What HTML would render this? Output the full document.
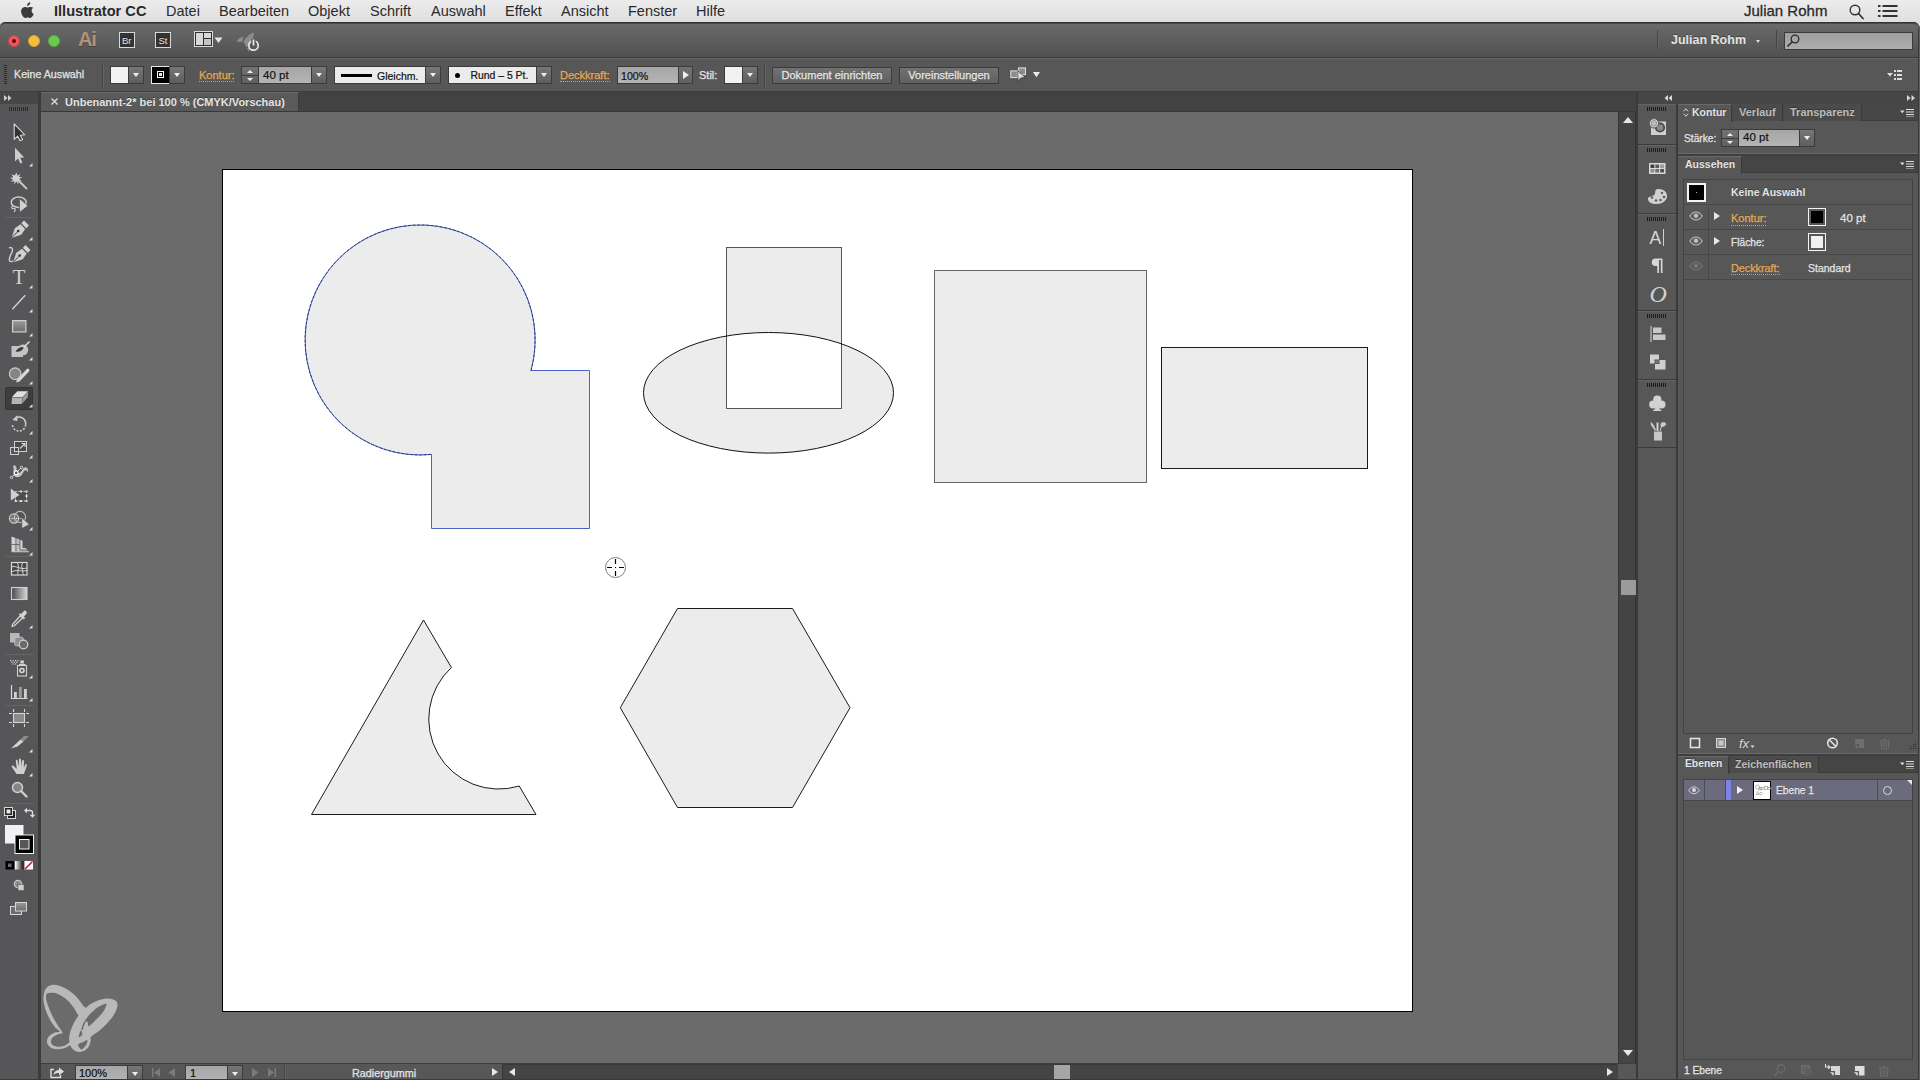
<!DOCTYPE html>
<html lang="de">
<head>
<meta charset="utf-8">
<title>Illustrator CC</title>
<style>
*{box-sizing:border-box;margin:0;padding:0}
html,body{width:1920px;height:1080px;overflow:hidden;background:#575757}
body{position:relative;font-family:"DejaVu Sans Condensed","DejaVu Sans","Liberation Sans",sans-serif;font-size:11px;color:#e6e6e6}
.abs{position:absolute}
.t{position:absolute;white-space:nowrap;line-height:1}
#menubar{left:0;top:0;width:1920px;height:30px;background:linear-gradient(#ececec 0,#dfdfdf 22px);color:#2a2a2a;font-family:"Liberation Sans",sans-serif;font-size:14.5px}
#menubar .t{top:0;line-height:22px}
#appbar{left:0;top:22px;width:1919px;height:36px;background:linear-gradient(#6b6b6b,#515151);border-top:1px solid #333;box-shadow:inset 0 1px 0 #4a4a4a;border-bottom:1px solid #3a3a3a;border-radius:5px 5px 0 0}
#ctrlbar{left:0;top:58px;width:1920px;height:34px;background:#575757;border-top:1px solid #666;border-bottom:1px solid #3c3c3c}
#tabstrip{left:41px;top:92px;width:1595px;height:20px;background:#424242;border-bottom:1px solid #383838}
#canvas{left:41px;top:112px;width:1577px;height:951px;background:#6b6b6b}
#artboard{left:222px;top:169px;width:1191px;height:843px;background:#fff;border:1px solid #000}
#tools{left:0;top:92px;width:41px;height:988px;background:#565658;border-right:3px solid #3b3b3b}
#vscroll{left:1618px;top:112px;width:18px;height:951px;background:#444;border-left:1px solid #363636;border-right:1px solid #363636}
#statusbar{left:41px;top:1063px;width:1595px;height:17px;background:#575757;border-top:1px solid #3e3e3e}
#panels{left:1678px;top:92px;width:242px;height:988px;background:#575757}
.b{font-weight:bold;-webkit-text-stroke:0}
.dim{color:#bdbdbd}
.ptab{background:#4b4b4b;border-right:1px solid #3a3a3a}
.ptab.on{background:#575757;border-top:1px solid #6a6a6a}

.ui{font-family:"Liberation Sans",sans-serif;font-size:11px;color:#e4e4e4;-webkit-text-stroke:0.3px currentColor;text-shadow:0 -1px 0 rgba(0,0,0,.35)}
.or{color:#e2aa5a}
.dk{color:#111;text-shadow:none;-webkit-text-stroke:0.2px #111}
.dd{position:absolute;width:16px;background:linear-gradient(#767676,#5e5e5e);border:1px solid #3b3b3b}
.dd:after{content:"";position:absolute;left:50%;top:50%;margin:-2px 0 0 -3.5px;border:3.5px solid transparent;border-top:4.5px solid #efefef;border-bottom:0}
.inp{position:absolute;background:linear-gradient(#a6a6a6,#b4b4b4);border:1px solid #3b3b3b}
.lt{position:absolute;background:#ebebeb;border:1px solid #3b3b3b}
.btn{position:absolute;background:linear-gradient(#727272,#5f5f5f);border:1px solid #3b3b3b;text-align:center}
.sep{position:absolute;width:2px;border-left:1px solid #474747;border-right:1px solid #646464}
.dot{border-bottom:1px dotted #d6a050}
#ctrlbar .t,#tabstrip .t{margin-top:1px}
#panels .t{margin-top:.5px}
#panels .t.b{margin-top:.2px}
</style>
</head>
<body>
<!-- mac menu bar -->
<div id="menubar" class="abs">
<svg class="abs" style="left:20px;top:2px" width="15" height="17" viewBox="0 0 15 17"><path fill="#3a3a3a" d="M10.3 0.2c.1 1-.3 1.9-.9 2.6-.6.7-1.500 1.200-2.400 1.100-.1-.9.400-1.900.900-2.500C8.500.7 9.500.2 10.300.200zM13.300 5.800c-.1.100-1.700 1-1.700 3 0 2.300 2 3.100 2.100 3.100 0 .1-.3 1.100-1.100 2.200-.6.900-1.300 1.900-2.400 1.900-1 0-1.300-.6-2.500-.6s-1.600.6-2.500.6c-1.100 0-1.800-1-2.500-1.900C1.400 12.200.500 9.400 1.500 7.300c.600-1.500 2-2.400 3.400-2.400 1.100 0 2 .700 2.600.700.600 0 1.700-.800 3-.700.500 0 2 .200 2.800.900z"/></svg>
<span class="t" style="left:54px;font-weight:bold;font-size:14.6px">Illustrator CC</span>
<span class="t" style="left:166px">Datei</span>
<span class="t" style="left:219px">Bearbeiten</span>
<span class="t" style="left:308px">Objekt</span>
<span class="t" style="left:370px">Schrift</span>
<span class="t" style="left:431px">Auswahl</span>
<span class="t" style="left:505px">Effekt</span>
<span class="t" style="left:561px">Ansicht</span>
<span class="t" style="left:628px">Fenster</span>
<span class="t" style="left:696px">Hilfe</span>
<span class="t" style="left:1744px;font-size:15px;-webkit-text-stroke:0.3px #2a2a2a">Julian Rohm</span>
<svg class="abs" style="left:1848px;top:3px" width="18" height="18" viewBox="0 0 18 18"><circle cx="7" cy="7" r="4.800" fill="none" stroke="#333" stroke-width="1.400"/><path d="M10.500 10.500L15 15.500" stroke="#333" stroke-width="1.800" stroke-linecap="round"/></svg>
<svg class="abs" style="left:1878px;top:5px" width="20" height="12" viewBox="0 0 20 12"><g fill="#333"><rect x="0" y="0" width="2.500" height="2"/><rect x="4.500" y="0" width="15" height="2"/><rect x="0" y="5" width="2.500" height="2"/><rect x="4.500" y="5" width="15" height="2"/><rect x="0" y="10" width="2.500" height="2"/><rect x="4.500" y="10" width="15" height="2"/></g></svg>
</div>
<!-- application bar -->
<div id="appbar" class="abs ui">
<div class="abs" style="left:8px;top:12px;width:12px;height:12px;border-radius:6px;background:#e8585c;border:1px solid #c9484c"></div><div class="abs" style="left:12px;top:16px;width:4px;height:4px;border-radius:2px;background:#5a0a0c"></div>
<div class="abs" style="left:28px;top:12px;width:12px;height:12px;border-radius:6px;background:#f3be3b;border:1px solid #d8a22a"></div>
<div class="abs" style="left:48px;top:12px;width:12px;height:12px;border-radius:6px;background:#6bcb4c;border:1px solid #55b03a"></div>
<span class="t" style="left:78px;top:6px;font-size:20px;font-weight:bold;color:#b39179;-webkit-text-stroke:0;text-shadow:0 1px 0 rgba(0,0,0,.3);letter-spacing:-1.2px">Ai</span>
<div class="abs" style="left:119px;top:9px;width:16px;height:16px;border:1px solid #d9d9d9;background:#333"></div><span class="t" style="left:122px;top:12.500px;font-size:9.500px;color:#e6e6e6;-webkit-text-stroke:0">Br</span>
<div class="abs" style="left:155px;top:9px;width:16px;height:16px;border:1px solid #d9d9d9;background:#333"></div><span class="t" style="left:158.500px;top:12.500px;font-size:9.500px;color:#e6e6e6;-webkit-text-stroke:0">St</span>
<svg class="abs" style="left:194px;top:8px" width="30" height="16" viewBox="0 0 30 16"><rect x="0.500" y="0.500" width="18" height="15" fill="#2f2f2f" stroke="#dcdcdc"/><rect x="2" y="2" width="7" height="12" fill="#d8d8d8"/><rect x="10" y="2" width="7" height="5" fill="#d8d8d8"/><rect x="10" y="8" width="7" height="6" fill="#c4c4c4"/><path d="M20.500 6.500h8l-4 5.500z" fill="#e4e4e4"/></svg>
<svg class="abs" style="left:235px;top:8px" width="26" height="22" viewBox="0 0 26 22"><path d="M19 1.500c-4 1-8 4.500-10.500 9l3 6c4-3 7-8 7.500-15z" fill="#8d8d8d"/><path d="M8.500 5.500c-3 .5-5.500 2.500-7 5l5.500.500z" fill="#8d8d8d"/><path d="M12 17l1.500 3.500 2-3z" fill="#8d8d8d"/><circle cx="18.500" cy="14.500" r="4.700" fill="none" stroke="#e8e8e8" stroke-width="1.700"/><path d="M18.500 8v6" stroke="#585858" stroke-width="4.500"/><path d="M18.500 8.500v6" stroke="#e8e8e8" stroke-width="1.800"/></svg>
<div class="sep" style="left:1657px;top:7px;height:20px"></div>
<span class="t" style="left:1671px;top:11px;font-size:12.500px;font-weight:bold;-webkit-text-stroke:0">Julian Rohm</span>
<div class="abs" style="left:1755.500px;top:16.500px;border:2.500px solid transparent;border-top:3px solid #ddd;border-bottom:0"></div>
<div class="sep" style="left:1776px;top:7px;height:20px"></div>
<div class="inp" style="left:1784px;top:9px;width:129px;height:18px;background:linear-gradient(#9f9f9f,#adadad)"></div>
<svg class="abs" style="left:1786px;top:10px" width="16" height="16" viewBox="0 0 16 16"><circle cx="9" cy="6" r="3.800" fill="none" stroke="#2a2a2a" stroke-width="1.300"/><path d="M6.300 8.700L1.500 13.500" stroke="#2a2a2a" stroke-width="1.600"/></svg>
</div>
<!-- control bar -->
<div id="ctrlbar" class="abs ui">
<div class="abs" style="left:4px;top:6px;width:3px;height:20px;background:repeating-linear-gradient(#2c2c2c 0 1px,transparent 1px 2px)"></div>
<span class="t" style="left:14px;top:9px;font-size:10.700px">Keine Auswahl</span>
<div class="sep" style="left:102px;top:4px;height:25px"></div>
<div class="lt" style="left:110px;top:7px;width:19px;height:18px;background:#f2f2f2"></div><div class="dd" style="left:128px;top:7px;height:18px"></div>
<div class="abs" style="left:151px;top:7px;width:19px;height:18px;background:#000;border:1px solid #e8e8e8"></div><div class="abs" style="left:157px;top:12px;width:7px;height:7px;border:1px solid #fff;background:#000"></div><div class="abs" style="left:159px;top:14px;width:3px;height:3px;background:#e8e8e8"></div><div class="dd" style="left:169px;top:7px;height:18px"></div>
<span class="t or dot" style="left:199px;top:10px;padding-bottom:0">Kontur:</span>
<div class="btn" style="left:241px;top:7px;width:18px;height:18px"><div class="abs" style="left:0;top:8px;width:16px;height:1px;background:#3b3b3b"></div><div class="abs" style="left:5px;top:2.500px;border:3px solid transparent;border-bottom:3.500px solid #efefef;border-top:0"></div><div class="abs" style="left:5px;top:11px;border:3px solid transparent;border-top:3.500px solid #efefef;border-bottom:0"></div></div>
<div class="inp" style="left:258px;top:7px;width:54px;height:18px"></div><span class="t dk" style="left:263px;top:10px;font-size:11.500px">40 pt</span>
<div class="dd" style="left:311px;top:7px;height:18px"></div>
<div class="lt" style="left:334px;top:7px;width:92px;height:18px"></div><div class="abs" style="left:341px;top:15px;width:31px;height:3px;background:#000"></div><span class="t dk" style="left:377px;top:10.500px;font-size:10.500px">Gleichm.</span><div class="dd" style="left:425px;top:7px;height:18px"></div>
<div class="lt" style="left:448px;top:7px;width:89px;height:18px"></div><div class="abs" style="left:455px;top:14px;width:5px;height:5px;border-radius:3px;background:#000"></div><span class="t dk" style="left:470.500px;top:10.500px;font-size:10.400px">Rund – 5 Pt.</span><div class="dd" style="left:536px;top:7px;height:18px"></div>
<span class="t or dot" style="left:560px;top:10px;padding-bottom:0">Deckkraft:</span>
<div class="inp" style="left:617px;top:7px;width:62px;height:18px"></div><span class="t dk" style="left:621px;top:10.500px;font-size:10.600px">100%</span>
<div class="btn" style="left:678px;top:7px;width:15px;height:18px"><div class="abs" style="left:4px;top:4px;border:4.500px solid transparent;border-left:6px solid #efefef;border-right:0"></div></div>
<span class="t" style="left:699px;top:10px">Stil:</span>
<div class="lt" style="left:724px;top:7px;width:19px;height:18px;background:#f2f2f2"></div><div class="dd" style="left:742px;top:7px;height:18px"></div>
<div class="sep" style="left:764px;top:4px;height:25px"></div>
<div class="btn" style="left:772px;top:8px;width:120px;height:17px;line-height:15px">Dokument einrichten</div>
<div class="btn" style="left:899px;top:8px;width:100px;height:17px;line-height:15px">Voreinstellungen</div>
<svg class="abs" style="left:1009px;top:8px" width="34" height="16" viewBox="0 0 34 16"><rect x="1.800" y="3.900" width="6.600" height="6.700" fill="#8c8c8c" stroke="#e2e2e2" stroke-width="1"/><rect x="9.700" y=".9" width="6.800" height="6.700" fill="#8c8c8c" stroke="#e2e2e2" stroke-width="1"/><path d="M8.800 3.800L9 14 11.600 11.100 16.200 10.300Z" fill="#dedede" stroke="#333" stroke-width=".7"/><path d="M23.900 5h7.100l-3.550 5.200z" fill="#eaeaea"/></svg>
<svg class="abs" style="left:1887px;top:11px" width="16" height="10" viewBox="0 0 16 10"><path d="M0 3h6l-3 3.500z" fill="#ddd"/><g fill="#ddd"><rect x="7" y="0" width="2" height="2"/><rect x="10" y="0" width="5" height="2"/><rect x="7" y="4" width="2" height="2"/><rect x="10" y="4" width="5" height="2"/><rect x="7" y="8" width="2" height="2"/><rect x="10" y="8" width="5" height="2"/></g></svg>
</div>
<!-- document tab strip -->
<div id="tabstrip" class="abs ui">
<div class="abs" style="left:0;top:0;width:258px;height:19px;background:#5a5a5a;border-right:1px solid #3a3a3a;border-top:1px solid #6a6a6a"></div>
<svg class="abs" style="left:9px;top:5px" width="9" height="9" viewBox="0 0 9 9"><path d="M1.500 1.500l6 6M7.500 1.500l-6 6" stroke="#e0e0e0" stroke-width="1.300"/></svg>
<span class="t" style="left:24px;top:4px;font-weight:bold;font-size:11px;-webkit-text-stroke:0">Unbenannt-2* bei 100 % (CMYK/Vorschau)</span>
</div>
<!-- canvas -->
<div id="canvas" class="abs"></div>
<div id="artboard" class="abs"></div>
<svg class="abs" id="art" style="left:0;top:0" width="1920" height="1080" viewBox="0 0 1920 1080">
<g fill="#ececec" stroke="#1a1a1a" stroke-width="1">
<path d="M531.0 370.5 A115 115 0 1 0 431.5 454.4 L431.5 528.5 L589.5 528.5 L589.5 370.5 Z" stroke="#4a63c8"/>
<path d="M531 370.500A115 115 0 1 0 431.500 454.400" fill="none" stroke="#1c2660" stroke-dasharray="3 1.500" stroke-opacity=".8"/>
<path fill-rule="evenodd" stroke="none" d="M726.500 247.500H841.500V408.500H726.500Z M643.500 392.800a125 60.300 0 1 0 250 0a125 60.300 0 1 0 -250 0Z"/>
<rect x="726.500" y="247.500" width="115" height="161" fill="none" stroke="#555"/>
<ellipse cx="768.500" cy="392.800" rx="125" ry="60.300" fill="none" stroke="#111"/>
<rect x="934.5" y="270.5" width="212" height="212" stroke="#666"/>
<rect x="1161.5" y="347.5" width="206" height="121"/>
<path d="M423.5 620 L451.4 667.5 A70 70 0 0 0 519.2 786 L536 814.5 L311.5 814.5 Z"/>
<path d="M620.3 707.7 L677.5 608.5 L792.5 608.5 L850 707.7 L792.5 807.5 L677.5 807.5 Z"/>
</g>
<g fill="none" stroke="#7c7c7c" stroke-width="1">
<circle cx="615.500" cy="567.500" r="10"/>
<path d="M615.500 559v5M615.500 571v5M607 567.500h5M619 567.500h5" stroke="#000" stroke-width="1.200"/><rect x="615" y="567" width="1" height="1" fill="#000" stroke="none"/>
</g>
</svg>
<svg class="abs" style="left:36px;top:975px" width="100" height="85" viewBox="0 0 1271 1080">
<g fill="#b9b9b9">
<path d="M640 440C646 416 613 407 600 390C586 372 576 355 560 335C543 314 523 287 500 265C476 242 448 217 420 198C391 178 360 162 330 150C300 137 266 127 240 125C213 122 189 126 170 135C150 143 136 157 125 175C113 192 105 215 100 240C95 264 93 293 95 320C96 346 102 371 110 400C117 428 127 460 140 490C152 520 168 551 185 580C201 608 220 637 240 660C259 683 300 706 300 718C300 729 259 723 240 730C220 737 200 748 185 760C170 771 157 785 150 800C142 815 138 833 140 850C141 866 148 885 160 900C171 914 190 927 210 935C230 942 256 945 280 945C303 945 328 941 350 935C371 928 393 914 410 905C426 895 446 888 450 880C453 871 441 853 430 855C418 856 398 879 380 888C361 896 340 904 320 908C300 911 277 912 260 910C242 907 226 901 215 893C203 884 195 871 192 858C189 845 191 828 197 815C202 802 213 790 227 780C240 770 258 762 277 755C295 747 334 750 337 735C339 719 307 687 290 660C273 632 252 601 235 570C217 538 199 501 185 470C170 438 159 406 150 380C140 353 133 329 130 310C126 290 126 274 128 262C130 249 131 242 142 236C152 230 170 226 190 226C209 226 235 227 260 236C285 244 313 258 340 276C366 293 396 316 420 340C443 363 462 390 480 415C497 440 511 470 525 490C538 509 540 538 560 530C579 521 633 463 640 440Z"/>
<path fill-rule="evenodd" d="M1000 320C1018 328 1024 336 1030 350C1035 363 1038 380 1035 400C1031 420 1022 445 1010 470C997 495 980 523 960 550C940 576 916 603 890 630C863 656 831 684 800 710C768 735 717 763 700 785C682 806 700 819 695 840C690 860 682 890 670 910C657 930 638 948 620 960C601 971 580 976 560 977C540 977 518 974 500 965C481 955 462 939 450 920C437 900 429 875 425 850C420 825 420 798 425 770C429 741 438 710 450 680C461 649 477 615 495 585C512 555 531 528 555 500C578 471 605 440 635 415C664 390 697 367 730 350C762 332 798 320 830 312C861 303 891 298 920 300C948 301 981 311 1000 320ZM578 690C579 676 588 645 600 620C612 595 630 565 650 540C670 514 695 488 720 465C745 441 770 416 800 400C829 383 883 358 895 365C906 371 884 414 870 440C855 465 831 495 810 520C788 545 763 568 740 590C717 611 685 648 672 650C658 652 662 611 657 602C651 592 644 585 637 592C629 598 619 622 612 640C604 658 597 691 592 700C586 708 576 703 578 690ZM543 792C540 786 547 759 552 745C556 730 565 703 572 705C578 707 590 744 590 757C589 769 575 772 568 778C560 783 545 797 543 792ZM535 882C544 871 580 861 600 852C619 842 645 821 652 826C659 830 650 862 642 880C633 897 613 919 602 930C591 941 585 948 576 946C566 943 552 925 546 915C539 904 526 892 535 882Z"/>
</g>
</svg>
<!-- left tools -->
<div id="tools" class="abs"></div>
<svg class="abs" style="left:0;top:92px" width="40" height="988" viewBox="0 92 40 988">
<defs>
<linearGradient id="gv" x1="0" y1="0" x2="0" y2="1"><stop offset="0" stop-color="#9a9a9a"/><stop offset="1" stop-color="#6c6c6c"/></linearGradient>
<linearGradient id="gh" x1="0" y1="0" x2="1" y2="0"><stop offset="0" stop-color="#4a4a4a"/><stop offset="1" stop-color="#d6d6d6"/></linearGradient>
<linearGradient id="gh2" x1="0" y1="0" x2="1" y2="0"><stop offset="0" stop-color="#fff"/><stop offset="1" stop-color="#111"/></linearGradient>
<path id="cnr" d="M0 3.500L3.500 0V3.500Z" fill="#dedede"/>
</defs>
<rect x="0" y="92" width="38" height="12" fill="#464646"/>
<path d="M4 95l3.500 3-3.500 3zM8 95l3.500 3-3.500 3z" fill="#cfcfcf"/>
<g fill="#2a2a2a"><rect x="9" y="107" width="1" height="4"/><rect x="11" y="107" width="1" height="4"/><rect x="13" y="107" width="1" height="4"/><rect x="15" y="107" width="1" height="4"/><rect x="17" y="107" width="1" height="4"/><rect x="19" y="107" width="1" height="4"/><rect x="21" y="107" width="1" height="4"/><rect x="23" y="107" width="1" height="4"/><rect x="25" y="107" width="1" height="4"/><rect x="27" y="107" width="1" height="4"/></g>
<g stroke="#656565" stroke-width="1"><path d="M5 217.500h29M5 556.500h29M5 654.500h29M5 705.500h29M5 803.500h29"/></g>
<!-- selection -->
<path d="M14.200 123.800V139.400L17.700 136.200 20 140.800 22.600 139.600 20.300 135.200 24.800 134.800Z" fill="#333" stroke="#d6d6d6" stroke-width="1.100" stroke-linejoin="round"/>
<!-- direct selection -->
<path d="M15 147.800V161.500L18 158.600 20.300 163.400 22.400 162.400 20.200 157.800 24.200 157.500Z" fill="#cdcdcd"/>
<use href="#cnr" x="29" y="163"/>
<!-- magic wand -->
<g transform="translate(16.500 178) scale(.86) translate(-16 -178)"><path d="M16 171.500l1.200 3.800 3.300-2.300-1.500 3.700 4 .500-3.700 1.800 2.700 3-3.900-.800.200 4-2.500-3.100-2.300 3.300-.100-4-3.900 1.200 2.500-3.200-3.700-1.500 3.900-.900-2-3.500 3.600 1.700z" fill="#d0d0d0"/></g>
<path d="M19 181l7.500 7.500" stroke="#c8c8c8" stroke-width="1.800" stroke-linecap="round"/>
<!-- lasso -->
<ellipse cx="18.700" cy="202.300" rx="7.500" ry="5.200" fill="none" stroke="#cdcdcd" stroke-width="1.500"/>
<path d="M12.500 206c-1.500 1.500-.500 3 1.200 2.500s2 1.500.500 3.500" fill="none" stroke="#cdcdcd" stroke-width="1.200"/>
<path d="M19.500 198.500V212.500L28 205.800Z" fill="#d2d2d2" stroke="#575757" stroke-width=".8"/>
<!-- pen -->
<g id="pen"><path d="M11.500 238L14.800 228.200 20.600 224.300 25.200 229 21.200 234.800Z" fill="#cfcfcf"/><path d="M21.400 223.300L24 220.600 29 225.600 26.300 228.300Z" fill="#d4d4d4"/><path d="M11.800 237.700L17.800 231.500" stroke="#444" stroke-width="1"/><circle cx="18.200" cy="231" r="1.300" fill="#333"/></g>
<use href="#cnr" x="29" y="237"/>
<!-- curvature pen -->
<use href="#pen" x="1.500" y="24.500"/>
<path d="M9 248c2.500-1.300 4.300.500 3.200 3.500-1 3-3.700 6-2.700 9 .500 1.500 2.200 1.500 3.300.300" fill="none" stroke="#cfcfcf" stroke-width="1.400"/>
<!-- type -->
<text x="19" y="284.300" text-anchor="middle" font-family="Liberation Serif,serif" font-size="21" fill="#d2d2d2">T</text>
<use href="#cnr" x="29" y="285"/>
<!-- line -->
<path d="M12.300 309.200L25.200 295.200" stroke="#d2d2d2" stroke-width="1.400"/>
<use href="#cnr" x="29" y="309"/>
<!-- rectangle -->
<rect x="12.600" y="320.600" width="13.300" height="11.300" fill="url(#gv)" stroke="#d0d0d0" stroke-width="1.200"/>
<use href="#cnr" x="29" y="333"/>
<!-- blob brush -->
<path d="M11.500 346H19a5.500 5.500 0 1 1 4 9.500V357H11.500Z" fill="#c4c4c4"/>
<path d="M15.500 351.500c2-4 6-5 8.500-4.500-1 3.500-5 5.500-8.500 4.500z" fill="#3c3c3c"/>
<path d="M23.500 347.500L29.500 341.500" stroke="#d8d8d8" stroke-width="1.600"/>
<use href="#cnr" x="29" y="357"/>
<!-- shaper -->
<circle cx="15.200" cy="373.700" r="5.800" fill="#858585" stroke="#cdcdcd" stroke-width="1.200"/>
<path d="M18.800 379.800L27.800 370.300" stroke="#d6d6d6" stroke-width="3.400" stroke-linecap="round"/><path d="M16 382.500l1.200-3.700 2.600 2.500z" fill="#d6d6d6"/>
<use href="#cnr" x="29" y="381"/>
<!-- eraser (active) -->
<rect x="5.500" y="387.500" width="27" height="22" rx="1" fill="#3d3d3d" stroke="#343434"/>
<path d="M17.300 391.300H28.200L22.800 397H12Z" fill="#dedede"/><path d="M12 397.600H22.600L21.600 404H11.500Z" fill="#b4b4b4"/><path d="M23 397.400L28.300 391.800 27.600 397.200 22 404Z" fill="#9c9c9c"/>
<use href="#cnr" x="29" y="404"/>
<!-- rotate -->
<g transform="translate(0 -1.800)"><path d="M15.500 420A6.600 6.600 0 0 1 25.600 426.500" fill="none" stroke="#cdcdcd" stroke-width="1.600"/><path d="M12.300 421.800L17.300 417V422.800Z" fill="#cdcdcd"/>
<path d="M25.600 426.500A6.600 6.600 0 0 1 12.400 426" fill="none" stroke="#cdcdcd" stroke-width="1.600" stroke-dasharray="2 1.500"/></g>
<use href="#cnr" x="29" y="431"/>
<!-- scale -->
<rect x="14.500" y="441.500" width="12" height="10" fill="#4a4a4a" stroke="#d0d0d0"/><rect x="10.500" y="447.500" width="8" height="7" fill="none" stroke="#d0d0d0"/>
<path d="M20 448.500L24.500 444M21.500 443.500h3.500v3.500" fill="none" stroke="#d6d6d6" stroke-width="1.100"/>
<use href="#cnr" x="29" y="455"/>
<!-- width/warp -->
<path d="M13 466c2.500-1.500 4 .500 3.500 3.500-.400 2.500 1 4.500 3.500 3 2.500-1.600 3-5 5.500-5.200 2-.200 3 2 2.500 5-1.200-2-2.500-2.700-3.800-1.200-1.700 2-2.500 5.500-6 6-3.500.400-5.300-2-4.700-5.500.400-2.600-.100-4.500-.500-5.600z" fill="#c6c6c6"/>
<path d="M11.500 477.500L21.500 467.500" stroke="#e6e6e6" stroke-width=".9"/><circle cx="11.500" cy="477.500" r="1.200" fill="#575757" stroke="#eee" stroke-width=".8"/><circle cx="21.500" cy="467.500" r="1.200" fill="#575757" stroke="#eee" stroke-width=".8"/><circle cx="16.200" cy="472.800" r="1.900" fill="#575757" stroke="#fff" stroke-width="1.100"/>
<use href="#cnr" x="29" y="479"/>
<!-- free transform -->
<rect x="15.500" y="491.500" width="11" height="9.500" fill="#4d4d4d" stroke="#d0d0d0" stroke-dasharray="1.500 1.200"/>
<g fill="#dcdcdc"><rect x="14.700" y="500" width="2" height="2"/><rect x="20" y="500" width="2" height="2"/><rect x="25.500" y="500" width="2" height="2"/><rect x="25.500" y="495" width="2" height="2"/><rect x="25.500" y="490.500" width="2" height="2"/><rect x="20" y="490.500" width="2" height="2"/></g>
<path d="M10.800 488.500V500.500L19.500 495Z" fill="#cfcfcf"/>
<!-- shape builder -->
<circle cx="14" cy="518.500" r="4.600" fill="#777" stroke="#cdcdcd" stroke-width="1.100"/><circle cx="20" cy="517" r="5.600" fill="none" stroke="#bdbdbd" stroke-width="1.100"/>
<path d="M11.500 518.500h10" stroke="#f2f2f2" stroke-width="1.100" stroke-dasharray="1.200 1"/>
<path d="M21.800 517.500V528.500L29.300 524.500Z" fill="#d2d2d2" stroke="#575757" stroke-width=".7"/>
<use href="#cnr" x="29" y="527"/>
<!-- perspective grid -->
<path d="M11.500 536.500L15.500 538V551.500H11.500Z" fill="#d2d2d2"/><path d="M16.300 538.300L19.500 539.500V551.500H16.300Z" fill="#bdbdbd"/><path d="M20.300 539.800L22.500 540.800V548H20.300Z" fill="#d2d2d2"/>
<path d="M11.500 544.500h8" stroke="#575757" stroke-width=".8"/>
<path d="M20.300 548.500H26M18 550H27.500M11.500 551.800H29" stroke="#d2d2d2" stroke-width="1.100"/>
<use href="#cnr" x="29" y="552"/>
<!-- mesh -->
<rect x="11.500" y="562.500" width="15.500" height="12.500" fill="#444" stroke="#d8d8d8" stroke-width="1.200"/>
<path d="M11.500 567c4-2 8 3 15.500 1M11.500 572c5-3 9 0 15.500-1.500M17 562.500c3 4 0 8 1 12.500M22.500 562.500c-2 5 1 8 .500 12.500" fill="none" stroke="#d8d8d8" stroke-width="1"/>
<!-- gradient -->
<rect x="11.500" y="587.500" width="15.500" height="12" fill="url(#gh)" stroke="#d0d0d0" stroke-width="1.100"/>
<!-- eyedropper -->
<path d="M12.500 624.500L20.500 615.500 22.800 617.800 14 626 12 626.500Z" fill="#575757" stroke="#d4d4d4" stroke-width="1.200" stroke-linejoin="round"/>
<path d="M19.500 613.800L24.500 618.800" stroke="#c8c8c8" stroke-width="2.200"/><path d="M22 616L25 612.500" stroke="#d6d6d6" stroke-width="3.600" stroke-linecap="round"/>
<use href="#cnr" x="29" y="625"/>
<!-- blend -->
<rect x="10" y="633" width="9.500" height="9.500" fill="#b8b8b8"/><rect x="14.700" y="637.200" width="8.600" height="8.600" rx="2" fill="#8d8d8d" stroke="#c2c2c2" stroke-width="1"/><circle cx="23.500" cy="644.500" r="4.300" fill="#6a6a6a" stroke="#d0d0d0" stroke-width="1.200"/>
<!-- symbol sprayer -->
<rect x="17.500" y="665.500" width="9" height="10.500" fill="#575757" stroke="#d0d0d0" stroke-width="1.100"/><rect x="20.300" y="660.500" width="3.600" height="3" fill="#d0d0d0"/><path d="M19 664.500h6.500" stroke="#d0d0d0" stroke-width="1.200"/>
<circle cx="22" cy="670.500" r="2" fill="none" stroke="#d8d8d8" stroke-width="1.600"/>
<g fill="#d8d8d8"><rect x="10" y="660" width="1.200" height="1.200"/><rect x="12.500" y="660" width="1.200" height="1.200"/><rect x="15" y="660" width="1.200" height="1.200"/><rect x="17.500" y="660" width="1.200" height="1.200"/><rect x="11.200" y="661.700" width="1.200" height="1.200"/><rect x="13.700" y="661.700" width="1.200" height="1.200"/><rect x="16.200" y="661.700" width="1.200" height="1.200"/><rect x="12.500" y="663.400" width="1.200" height="1.200"/><rect x="15" y="663.400" width="1.200" height="1.200"/></g>
<use href="#cnr" x="29" y="675"/>
<!-- graph -->
<path d="M11.500 685V698.500H27.500" fill="none" stroke="#d6d6d6" stroke-width="1.200"/>
<rect x="14" y="692" width="2.800" height="6" fill="#d0d0d0"/><rect x="19" y="687" width="2.800" height="11" fill="#9a9a9a"/><rect x="24" y="689" width="2.800" height="9" fill="#d0d0d0"/>
<use href="#cnr" x="29" y="698"/>
<!-- artboard -->
<rect x="13.500" y="713.500" width="11" height="9" fill="#8a8a8a" stroke="#d6d6d6" stroke-width="1.100"/>
<path d="M9 713.500h3M26 713.500h3M9 722.500h3M26 722.500h3M13.500 709v3M24.500 709v3M13.500 724v3M24.500 724v3" stroke="#d6d6d6" stroke-width="1.100"/>
<!-- slice -->
<path d="M11 748.500L20.500 739.500 23.500 741.500 17.500 746.500Z" fill="#d4d4d4"/><path d="M20.500 739.500L24 736H29L23.500 741.500Z" fill="#8c8c8c"/>
<use href="#cnr" x="29" y="749"/>
<!-- hand -->
<path d="M16.500 774h7.500c.500-2.500 2-5 2.800-8.500.300-1.500-1.200-2-1.800-.500l-1.200 3 .200-7c0-1.500-1.800-1.500-2 0l-.500 5.500-.500-7c-.100-1.500-1.900-1.500-2 0l-.200 7-1.200-5.800c-.300-1.400-2-1-1.800.400l1 8-3-3.200c-1.200-1.200-2.700-.100-1.800 1.300z" fill="#cfcfcf"/>
<use href="#cnr" x="29" y="773"/>
<!-- zoom -->
<circle cx="17.500" cy="787.500" r="5" fill="#858585" stroke="#cfcfcf" stroke-width="1.500"/><path d="M21.500 791.500L26.500 796.500" stroke="#cfcfcf" stroke-width="2.400" stroke-linecap="round"/>
<!-- default fill/stroke + swap -->
<rect x="7.500" y="810.500" width="8" height="8" fill="#222" stroke="#d8d8d8"/><rect x="4.500" y="807.500" width="8" height="8" fill="#222" stroke="#d8d8d8"/><rect x="6.500" y="809.500" width="4" height="4" fill="#e8e8e8"/>
<path d="M26 810.500h4.500c1.500 0 2 .500 2 2V815" fill="none" stroke="#dcdcdc" stroke-width="1.300"/><path d="M24 810.500l3-2.800v5.600zM32.500 817.800l-2.800-3h5.600z" fill="#dcdcdc"/>
<!-- fill / stroke -->
<rect x="5" y="825" width="18.500" height="18.500" fill="#f1f1f3"/>
<rect x="15" y="835" width="18.500" height="18.500" fill="#000" stroke="#f2f2f2" stroke-width="1"/>
<rect x="19.500" y="839.500" width="9.500" height="9.500" fill="#575757" stroke="#f2f2f2" stroke-width="1"/>
<!-- colour modes -->
<rect x="5.500" y="861" width="8.500" height="8.500" fill="#000"/><rect x="8" y="863.500" width="3.500" height="3.500" fill="#666"/>
<rect x="15" y="861" width="8.500" height="8.500" fill="url(#gh2)"/>
<rect x="24.500" y="861" width="8.500" height="8.500" fill="#fff"/><path d="M25 869L32.500 861.500" stroke="#c8203a" stroke-width="1.600"/>
<!-- draw mode -->
<circle cx="18" cy="884" r="3.700" fill="#8a8a8a" stroke="#c8c8c8" stroke-width="1.200"/><rect x="18" y="884.500" width="6" height="6" fill="#cfcfcf" stroke="#575757" stroke-width=".6"/>
<!-- screen mode -->
<rect x="10.500" y="906.500" width="11" height="8" fill="#6e6e6e" stroke="#d6d6d6"/><rect x="15.500" y="902.500" width="11" height="8.500" fill="url(#gv)" stroke="#d6d6d6"/>
</svg>

<div id="vscroll" class="abs">
<div class="abs" style="left:2px;top:468px;width:15px;height:15px;background:#9b9b9b"></div>
<div class="abs" style="left:4px;top:5px;border:5px solid transparent;border-bottom:6px solid #e6e6e6;border-top:0"></div>
<div class="abs" style="left:4px;top:938px;border:5px solid transparent;border-top:6px solid #e6e6e6;border-bottom:0"></div>
</div>
<div id="statusbar" class="abs ui">
<svg class="abs" style="left:9px;top:2px" width="15" height="13" viewBox="0 0 15 13"><path d="M4 3.500H1V11.500H10.500V9" fill="none" stroke="#dcdcdc" stroke-width="1.400"/><path d="M3.500 9c.500-3.500 2.500-5 5.500-5V1.500L14 5.500 9 9.500V7c-2.500 0-4 .500-5.500 2z" fill="#dcdcdc"/></svg>
<div class="inp" style="left:34px;top:1px;width:53px;height:17px;border-bottom:0"></div><span class="t dk" style="left:38px;top:4px;font-size:11px">100%</span>
<div class="dd" style="left:86px;top:1px;height:17px"></div>
<svg class="abs" style="left:110px;top:4px" width="130" height="10" viewBox="0 0 130 10"><g fill="#7a7a7a"><rect x="1" y="0" width="1.500" height="9"/><path d="M9 0v9L3 4.500z"/><path d="M24 0v9L17.500 4.500z"/><path d="M101 0v9l6.500-4.500z"/><path d="M117 0v9l6-4.500z"/><rect x="123.500" y="0" width="1.500" height="9"/></g></svg>
<div class="inp" style="left:144px;top:1px;width:43px;height:17px;border-bottom:0"></div><span class="t dk" style="left:149px;top:4px;font-size:11px">1</span>
<div class="dd" style="left:186px;top:1px;height:17px"></div>
<div class="sep" style="left:243px;top:1px;height:16px"></div>
<span class="t" style="left:311px;top:4px;font-size:10.800px">Radiergummi</span>
<div class="abs" style="left:451px;top:4px;border:4.500px solid transparent;border-left:6px solid #e8e8e8;border-right:0"></div>
<div class="abs" style="left:461px;top:0;width:1116px;height:17px;background:#444;border-left:1px solid #363636;border-top:1px solid #3a3a3a"></div>
<div class="abs" style="left:468px;top:4px;border:4.500px solid transparent;border-right:6px solid #e8e8e8;border-left:0"></div>
<div class="abs" style="left:1013px;top:1px;width:16px;height:16px;background:#a6a6a6"></div>
<div class="abs" style="left:1566px;top:4px;border:4.500px solid transparent;border-left:6px solid #e8e8e8;border-right:0"></div>
</div>
<svg class="abs" style="left:1636px;top:92px" width="42" height="988" viewBox="1636 92 42 988">
<rect x="1636" y="92" width="48" height="988" fill="#4c4c4c"/>
<rect x="1636" y="92" width="2" height="988" fill="#3a3a3a"/>
<rect x="1638" y="92" width="46" height="12" fill="#464646"/>
<rect x="1638" y="104" width="38" height="976" fill="#575757"/>
<rect x="1676" y="104" width="2" height="976" fill="#3a3a3a"/>
<path d="M1664.500 98l3.500-3v6zM1668.500 98l3.500-3v6z" fill="#d8d8d8"/>
<g fill="#3a3a3a"><rect x="1638" y="144" width="38" height="1"/><rect x="1638" y="213" width="38" height="1"/><rect x="1638" y="310" width="38" height="1"/><rect x="1638" y="379" width="38" height="1"/><rect x="1638" y="447" width="38" height="1"/></g>
<g fill="#646464"><rect x="1638" y="145" width="38" height="1"/><rect x="1638" y="214" width="38" height="1"/><rect x="1638" y="311" width="38" height="1"/><rect x="1638" y="380" width="38" height="1"/><rect x="1638" y="104" width="38" height="1"/></g>
<defs><g id="grp" fill="#1c1c1c"><rect x="0" width="1" height="4"/><rect x="2" width="1" height="4"/><rect x="4" width="1" height="4"/><rect x="6" width="1" height="4"/><rect x="8" width="1" height="4"/><rect x="10" width="1" height="4"/><rect x="12" width="1" height="4"/><rect x="14" width="1" height="4"/><rect x="16" width="1" height="4"/><rect x="18" width="1" height="4"/></g></defs>
<use href="#grp" x="1647" y="107"/><use href="#grp" x="1647" y="148"/><use href="#grp" x="1647" y="217"/><use href="#grp" x="1647" y="314"/><use href="#grp" x="1647" y="383"/>
<!-- libraries -->
<rect x="1651" y="121.500" width="15" height="13.500" fill="#cfcfcf"/><circle cx="1660" cy="127.500" r="4.200" fill="#8a8a8a" stroke="#4a4a4a" stroke-width="1.800"/>
<circle cx="1654" cy="123.300" r="4.700" fill="#cfcfcf" stroke="#575757" stroke-width="1"/><circle cx="1654" cy="123.300" r="2.800" fill="#bdbdbd" stroke="#8a8a8a" stroke-width=".8"/>
<!-- swatches -->
<rect x="1649" y="163" width="16.500" height="11" fill="#d8d8d8"/>
<rect x="1650.500" y="164.500" width="3.800" height="3.500" fill="#3c3c3c"/><rect x="1655.300" y="164.500" width="3.800" height="3.500" fill="#5a5a5a"/><rect x="1660.200" y="164.500" width="3.800" height="3.500" fill="#9a9a9a"/>
<rect x="1650.500" y="169" width="3.800" height="3.500" fill="#8c8c8c"/><rect x="1655.300" y="169" width="3.800" height="3.500" fill="#6e6e6e"/><rect x="1660.200" y="169" width="3.800" height="3.500" fill="#505050"/>
<!-- palette -->
<path d="M1657.500 189c5.500-.500 9.500 2.500 9.500 7s-4.500 8-10.500 8c-5 0-8.500-2-8.500-5 0-2.500 3-2.500 5.500-3.500 2-1 1.500-3.500 2-5 .300-.900 1-1.400 2-1.500z" fill="#d0d0d0"/>
<g fill="#5e5e5e"><circle cx="1652" cy="197.500" r="1.300"/><circle cx="1656" cy="200.500" r="1.300"/><circle cx="1660.500" cy="200" r="1.300"/><circle cx="1664" cy="197" r="1.300"/><circle cx="1662" cy="193" r="1.200"/></g>
<!-- character -->
<text x="1649.500" y="243.500" font-family="Liberation Sans,sans-serif" font-size="17.500" fill="#d8d8d8">A</text><rect x="1663" y="229" width="1" height="17" fill="#d0d0d0"/>
<!-- paragraph -->
<path d="M1655.500 258.500h7v14.500h-1.700v-13h-1.800v13h-1.700v-7h-1.800a3.700 3.700 0 0 1 0-7.500z" fill="#d6d6d6"/>
<!-- opentype -->
<text x="1649.500" y="301.500" font-family="Liberation Serif,serif" font-style="italic" font-size="24" fill="#d2d2d2">O</text>
<!-- align -->
<rect x="1650.500" y="326" width="1" height="16" fill="#d6d6d6"/><rect x="1653" y="327.500" width="8.500" height="5.500" fill="#c8c8c8"/><rect x="1653" y="334.500" width="12.500" height="5.500" fill="#c8c8c8"/>
<!-- pathfinder -->
<rect x="1650" y="354.500" width="9" height="9" fill="#cfcfcf"/><rect x="1655" y="360" width="10.500" height="9.500" fill="#cfcfcf"/><rect x="1655" y="360" width="4" height="3.500" fill="#7a7a7a" stroke="#575757" stroke-width="1"/>
<!-- symbols (club) -->
<circle cx="1657.300" cy="399.500" r="4.100" fill="#d2d2d2"/><circle cx="1653.200" cy="404.500" r="4.100" fill="#d2d2d2"/><circle cx="1661.400" cy="404.500" r="4.100" fill="#d2d2d2"/><path d="M1656.500 403h1.600c0 4 1.400 6.500 4 8h-9.600c2.600-1.500 4-4 4-8z" fill="#d2d2d2"/>
<!-- brushes -->
<rect x="1654" y="431.500" width="8" height="9" fill="#c8c8c8"/><path d="M1656.500 431v-8.500h2v8.500z" fill="#d0d0d0"/><path d="M1655 431l-3.500-5c-1-1.500-1-3-.500-4 1.500 1 3 3 5 8z" fill="#c6c6c6"/><path d="M1660 431l1.500-4.500M1661 423.500c2-1.500 4-1 5 .500-1 2-3 3-5 2.500z" fill="#c6c6c6" stroke="#c6c6c6" stroke-width="1"/>
</svg>

<div id="panels" class="abs ui">
<div class="abs" style="left:6px;top:0;width:236px;height:988px">
<!-- header strip -->
<div class="abs" style="left:-6px;top:0;width:242px;height:12px;background:#464646"></div>
<svg class="abs" style="left:223px;top:3px" width="9" height="6" viewBox="0 0 9 6"><path d="M0 0l3.500 3-3.500 3zM4.500 0l3.500 3-3.500 3z" fill="#d8d8d8"/></svg>
<!-- Kontur panel -->
<div class="abs" style="left:-6px;top:12px;width:242px;height:17px;background:#474747;border-bottom:1px solid #3c3c3c"></div>
<div class="abs ptab on" style="left:-6px;top:12px;width:54px;height:18px"></div>
<svg class="abs" style="left:-1px;top:16px" width="5.700" height="9" viewBox="0 0 7 11"><path d="M.8 4L3.500.8 6.200 4M.8 7l2.700 3.200L6.200 7" fill="none" stroke="#dcdcdc" stroke-width="1.200"/></svg>
<span class="t b" style="left:8px;top:15px;font-size:10.500px">Kontur</span>
<div class="abs ptab" style="left:49px;top:12px;width:50px;height:17px"></div>
<span class="t b dim" style="left:55px;top:15px;font-size:11px">Verlauf</span>
<div class="abs ptab" style="left:100px;top:12px;width:78px;height:17px"></div>
<span class="t b dim" style="left:106px;top:15px;font-size:11px">Transparenz</span>
<svg class="abs pm" style="left:216px;top:17px" width="15" height="8" viewBox="0 0 15 8"><path d="M0 1.500h4.600l-2.300 2.800z" fill="#ddd"/><path d="M6 .5h8M6 3h8M6 5.500h8M6 8h8" stroke="#ddd" stroke-width="1"/></svg>
<span class="t" style="left:0;top:41px;font-size:10.200px">Stärke:</span>
<div class="btn" style="left:37px;top:37px;width:18px;height:18px"><div class="abs" style="left:0;top:8px;width:16px;height:1px;background:#3b3b3b"></div><div class="abs" style="left:5px;top:2.500px;border:3px solid transparent;border-bottom:3.500px solid #efefef;border-top:0"></div><div class="abs" style="left:5px;top:11px;border:3px solid transparent;border-top:3.500px solid #efefef;border-bottom:0"></div></div>
<div class="inp" style="left:54px;top:37px;width:62px;height:18px"></div><span class="t dk" style="left:59px;top:39.500px;font-size:11.500px">40 pt</span>
<div class="dd" style="left:115px;top:37px;height:18px"></div>
<div class="abs" style="left:-6px;top:61px;width:242px;height:3px;background:#3e3e3e;border-top:1px solid #6a6a6a"></div>
<!-- Aussehen panel -->
<div class="abs" style="left:-6px;top:64px;width:242px;height:17px;background:#454545;border-bottom:1px solid #3c3c3c"></div>
<div class="abs ptab on" style="left:-6px;top:64px;width:64px;height:18px"></div>
<span class="t b" style="left:1px;top:67px;font-size:10.500px">Aussehen</span>
<svg class="abs pm" style="left:216px;top:69px" width="15" height="8" viewBox="0 0 15 8"><path d="M0 1.500h4.600l-2.300 2.800z" fill="#ddd"/><path d="M6 .5h8M6 3h8M6 5.500h8M6 8h8" stroke="#ddd" stroke-width="1"/></svg>
<div class="abs" style="left:-1px;top:87px;width:230px;height:555px;border:1px solid #434343;background:#575757"></div>
<div class="abs" style="left:0;top:112px;width:228px;height:1px;background:#484848"></div>
<div class="abs" style="left:0;top:137px;width:228px;height:1px;background:#484848"></div>
<div class="abs" style="left:0;top:162px;width:228px;height:1px;background:#484848"></div>
<div class="abs" style="left:0;top:187px;width:228px;height:1px;background:#484848"></div>
<div class="abs" style="left:24px;top:113px;width:1px;height:74px;background:#484848"></div>
<div class="abs" style="left:3px;top:91px;width:19px;height:19px;background:#000;border:2px solid #f4f4f4"></div><div class="abs" style="left:12px;top:100px;width:1px;height:1px;background:#aaa"></div>
<span class="t b" style="left:47px;top:95px;font-size:10.500px">Keine Auswahl</span>
<svg class="abs" style="left:5px;top:119px" width="14" height="10" viewBox="0 0 14 10"><path d="M.8 5C3 1.800 5 1 7 1s4 .8 6.200 4C11 8.200 9 9 7 9S3 8.200.8 5z" fill="none" stroke="#bdbdbd" stroke-width="1.100"/><circle cx="7" cy="4.700" r="2.300" fill="#bdbdbd"/></svg>
<div class="abs" style="left:30px;top:120px;border:4px solid transparent;border-left:6px solid #e8e8e8;border-right:0"></div>
<span class="t or dot" style="left:47px;top:120px;padding-bottom:1px">Kontur:</span>
<div class="abs" style="left:124px;top:116px;width:18px;height:18px;border:1px solid #f4f4f4;background:#575757"></div><div class="abs" style="left:127px;top:119px;width:12px;height:12px;background:#000"></div>
<span class="t" style="left:156px;top:120px;font-size:11.500px">40 pt</span>
<svg class="abs" style="left:5px;top:144px" width="14" height="10" viewBox="0 0 14 10"><path d="M.8 5C3 1.800 5 1 7 1s4 .8 6.200 4C11 8.200 9 9 7 9S3 8.200.8 5z" fill="none" stroke="#bdbdbd" stroke-width="1.100"/><circle cx="7" cy="4.700" r="2.300" fill="#bdbdbd"/></svg>
<div class="abs" style="left:30px;top:145px;border:4px solid transparent;border-left:6px solid #e8e8e8;border-right:0"></div>
<span class="t" style="left:47px;top:145px;font-size:10.200px">Fläche:</span>
<div class="abs" style="left:124px;top:141px;width:18px;height:18px;border:1px solid #f4f4f4;background:#575757"></div><div class="abs" style="left:127px;top:144px;width:12px;height:12px;background:#f0f0f0"></div>
<svg class="abs" style="left:5px;top:169px;opacity:.3" width="14" height="10" viewBox="0 0 14 10"><path d="M.8 5C3 1.800 5 1 7 1s4 .8 6.200 4C11 8.200 9 9 7 9S3 8.200.8 5z" fill="none" stroke="#bdbdbd" stroke-width="1.100"/><circle cx="7" cy="4.700" r="2.300" fill="#bdbdbd"/></svg>
<span class="t or dot" style="left:47px;top:170px;font-size:10.800px;padding-bottom:1px">Deckkraft:</span>
<span class="t" style="left:124px;top:170px;font-size:10.500px">Standard</span>
<!-- Aussehen footer icons -->
<svg class="abs" style="left:4px;top:644px" width="230" height="16" viewBox="0 0 230 16"><rect x="2.500" y="2.500" width="9" height="9" fill="none" stroke="#e2e2e2" stroke-width="1.600"/><rect x="28.500" y="2.500" width="9" height="9" fill="#8a8a8a" stroke="#d8d8d8" stroke-width="1"/><rect x="30.500" y="4.500" width="5" height="5" fill="#c8c8c8"/>
<text x="51" y="12" font-family="Liberation Sans,sans-serif" font-style="italic" font-size="13" fill="#dcdcdc">fx</text><path d="M62.500 9.500h4l-2 2.500z" fill="#dcdcdc"/>
<circle cx="144.500" cy="7" r="4.800" fill="none" stroke="#e4e4e4" stroke-width="1.600"/><path d="M141 3.500l7 7" stroke="#e4e4e4" stroke-width="1.600"/>
<path d="M167 3h9v9h-5v-4h-4z" fill="#6e6e6e"/><path d="M166 9l4 .5-.5 3.500z" fill="#6e6e6e"/>
<path d="M192 5h9M195 3.500h3M193 5l.8 8h6.400l.8-8" fill="none" stroke="#6e6e6e" stroke-width="1.200"/><path d="M195.300 6.500v5M197 6.500v5M198.700 6.500v5" stroke="#6e6e6e" stroke-width=".8"/>
<g fill="#2e2e2e"><rect x="227" y="6" width="1" height="1"/><rect x="225" y="8" width="1" height="1"/><rect x="227" y="8" width="1" height="1"/><rect x="223" y="10" width="1" height="1"/><rect x="225" y="10" width="1" height="1"/><rect x="227" y="10" width="1" height="1"/><rect x="221" y="12" width="1" height="1"/><rect x="223" y="12" width="1" height="1"/><rect x="225" y="12" width="1" height="1"/><rect x="227" y="12" width="1" height="1"/></g></svg>
<div class="abs" style="left:-6px;top:661px;width:242px;height:3px;background:#3e3e3e;border-top:1px solid #6a6a6a"></div>
<!-- Ebenen panel -->
<div class="abs" style="left:-6px;top:664px;width:242px;height:17px;background:#454545;border-bottom:1px solid #3c3c3c"></div>
<div class="abs ptab on" style="left:-6px;top:664px;width:51px;height:18px"></div>
<span class="t b" style="left:1px;top:667px;font-size:10.300px">Ebenen</span>
<div class="abs ptab" style="left:46px;top:664px;width:89px;height:17px"></div>
<span class="t b dim" style="left:51px;top:667px;font-size:10.500px">Zeichenflächen</span>
<svg class="abs pm" style="left:216px;top:669px" width="15" height="8" viewBox="0 0 15 8"><path d="M0 1.500h4.600l-2.300 2.800z" fill="#ddd"/><path d="M6 .5h8M6 3h8M6 5.500h8M6 8h8" stroke="#ddd" stroke-width="1"/></svg>
<div class="abs" style="left:-1px;top:687px;width:230px;height:281px;border:1px solid #434343;background:#575757"></div>
<div class="abs" style="left:0;top:688px;width:228px;height:21px;background:#6b6b7d;border-bottom:1px solid #474752"></div>
<div class="abs" style="left:20px;top:688px;width:1px;height:20px;background:#4a4a58"></div>
<div class="abs" style="left:41px;top:688px;width:1px;height:20px;background:#4a4a58"></div>
<div class="abs" style="left:42px;top:688px;width:5px;height:20px;background:#7c84ea"></div>
<div class="abs" style="left:193px;top:688px;width:1px;height:20px;background:#4a4a58"></div>
<svg class="abs" style="left:4px;top:694px" width="12" height="8.600" viewBox="0 0 14 10"><path d="M.8 5C3 1.800 5 1 7 1s4 .8 6.200 4C11 8.200 9 9 7 9S3 8.200.8 5z" fill="none" stroke="#d8d8e0" stroke-width="1.100"/><circle cx="7" cy="4.700" r="2.300" fill="#d8d8e0"/></svg>
<div class="abs" style="left:53px;top:694px;border:4px solid transparent;border-left:6px solid #f0f0f0;border-right:0"></div>
<div class="abs" style="left:69px;top:689px;width:18px;height:19px;background:#fff;border:1px solid #000"></div>
<svg class="abs" style="left:70px;top:690px" width="17" height="17" viewBox="0 0 17 17"><g fill="none" stroke="#999" stroke-width=".7"><circle cx="3.500" cy="5" r="2"/><rect x="5" y="5.500" width="2.500" height="2.500"/><ellipse cx="8" cy="6.500" rx="2" ry="1"/><rect x="10.500" y="4.500" width="3" height="3"/><rect x="13.800" y="5.500" width="2.500" height="1.800"/><path d="M2 12.500l1.800-3 1.500 3zM7 10l1.500 1.500L7 13l-1.500-1.500z"/></g></svg>
<span class="t" style="left:92px;top:693px;font-size:10.200px">Ebene 1</span>
<div class="abs" style="left:199px;top:694px;width:9px;height:9px;border-radius:5px;border:1px solid #d8d8e0"></div>
<div class="abs" style="left:223px;top:688px;border-left:5px solid transparent;border-top:5px solid #e8e8e8"></div>
<span class="t" style="left:0;top:973px;font-size:10.200px">1 Ebene</span>
<svg class="abs" style="left:88px;top:971px" width="124" height="15" viewBox="0 0 124 15"><circle cx="9" cy="5.500" r="3.800" fill="none" stroke="#6e6e6e" stroke-width="1.200"/><path d="M6.500 8.500L2.500 13" stroke="#6e6e6e" stroke-width="1.400"/>
<rect x="29.500" y="2.500" width="8" height="8" fill="#636363" stroke="#6e6e6e"/><rect x="33" y="6" width="7" height="7" fill="#5e5e5e"/>
<path d="M59 3h9v9h-5v-4h-4z" fill="#d8d8d8"/><path d="M58 9l4 .5-.5 3.500z" fill="#d8d8d8"/><path d="M53.500 1v3h4M56 2.500l2 1.700-2 1.700" fill="none" stroke="#e4e4e4" stroke-width="1.100"/>
<path d="M83 3h9.500v9.500H87V8h-4z" fill="#dedede"/><path d="M82 9l4 .5-.5 3.500z" fill="#dedede"/>
<path d="M107 5h9M110 3.500h3M108 5l.8 8h6.400l.8-8" fill="none" stroke="#6e6e6e" stroke-width="1.200"/><path d="M110.300 6.500v5M112 6.500v5M113.700 6.500v5" stroke="#6e6e6e" stroke-width=".8"/></svg>
<!-- window right edge -->
<div class="abs" style="left:234px;top:0;width:1px;height:988px;background:#3a3a3a"></div>
<div class="abs" style="left:235px;top:0;width:1px;height:988px;background:#626262"></div>
</div>
</div>

<div class="abs" style="left:0;top:1079px;width:1920px;height:1px;background:#3a3a3a"></div>
<div class="abs" style="left:1918px;top:28px;width:1px;height:1052px;background:#3a3a3a"></div>
<div class="abs" style="left:1919px;top:26px;width:1px;height:1054px;background:#606060"></div>
</body>
</html>
